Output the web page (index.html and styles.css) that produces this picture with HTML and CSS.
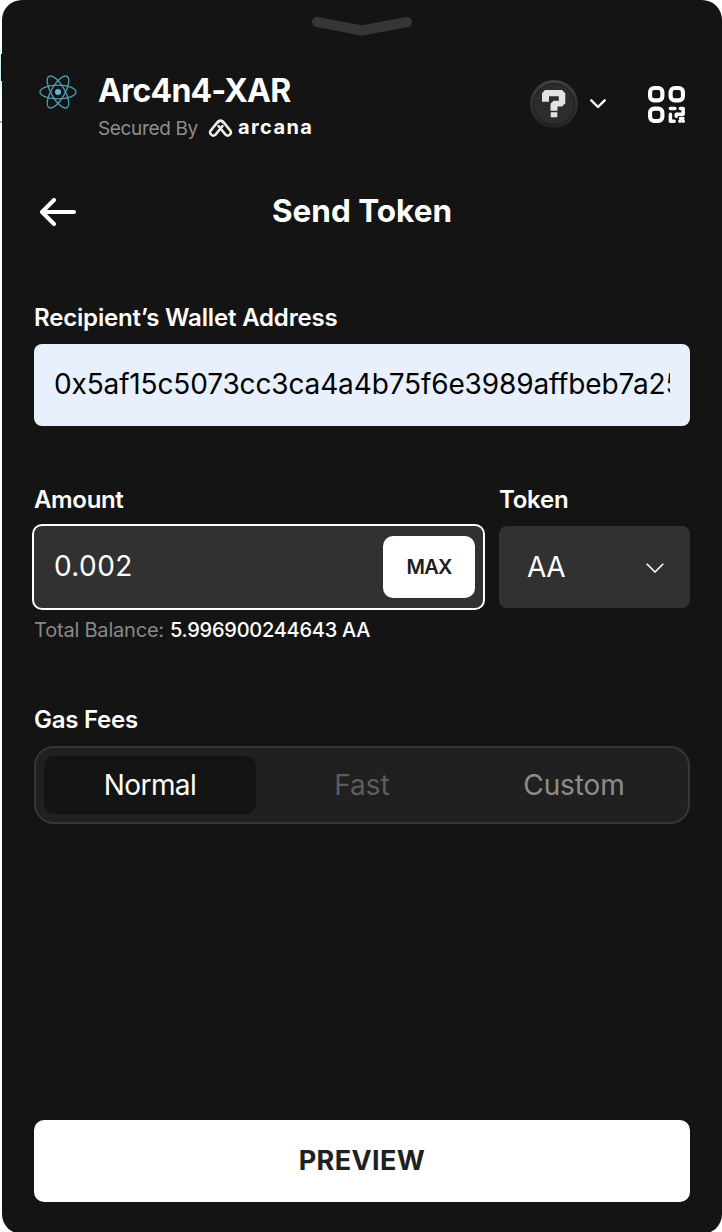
FILE: index.html
```html
<!DOCTYPE html>
<html lang="en">
<head>
<meta charset="utf-8">
<title>Send Token</title>
<link rel="stylesheet" href="styles.css">
</head>
<body>
<div class="page">
  <div class="backdrop"><div class="backdrop-glow"></div><div class="backdrop-rule"></div></div>
  <main class="wallet">
    <svg class="handle" viewBox="0 0 100 20" fill="none" stroke="#363636" stroke-width="10" stroke-linecap="round" stroke-linejoin="round"><path d="M5 6 50 14.5 95 6"/></svg>
    <header class="header">
      <svg class="app-logo" viewBox="-20 -20 40 40" fill="none" stroke="#4f9db5" stroke-width="1.3">
        <ellipse rx="18" ry="6.8"/><ellipse rx="18" ry="6.8" transform="rotate(60)"/><ellipse rx="18" ry="6.8" transform="rotate(120)"/>
        <circle r="3" fill="#61b8d6" stroke="none"/>
      </svg>
      <div class="brand">
        <h1 class="app-name"><span>Arc4n4-XAR</span></h1>
        <div class="secured">
          <span class="secured-by">Secured By</span>
          <svg class="arcana-mark" viewBox="0 0 24 20" fill="none" stroke="#ededed" stroke-width="2.5" stroke-linejoin="round" stroke-linecap="round">
            <path d="M14.2 4.1A3.1 3.1 0 0 0 9.6 3.4L2.2 12.6C.2 15.2 4 19.5 7 16.6L14 8"/>
            <path d="M9.800 4.100A3.100 3.100 0 0 1 14.400 3.400L21.800 12.600C23.800 15.200 20 19.500 17 16.600L10 8"/>
          </svg>
          <span class="arcana">arcana</span>
        </div>
      </div>
      <svg class="network" viewBox="0 0 48 48">
        <defs><linearGradient id="coin" x1="0" y1="0" x2="0" y2="1"><stop stop-color="#404040"/><stop offset="1" stop-color="#222"/></linearGradient>
        <linearGradient id="face" x1="0" y1="0" x2="0" y2="1"><stop stop-color="#2b2b2b"/><stop offset="1" stop-color="#2d2d2d"/></linearGradient></defs>
        <circle cx="24" cy="24" r="24" fill="url(#coin)"/>
        <circle cx="24" cy="24" r="20.5" fill="url(#face)" stroke="#1e1e1e"/>
        <path fill="#e2e2e2" d="M15 10h17l3.300 3.300v10L32 26.500h-4.500v4.200h-7v-7l3-3h5.300v-4.500h-9.800v5.500h-7v-8.500zM20.700 32.300h6.600v5h-6.600z"/>
      </svg>
      <svg class="network-caret" viewBox="0 0 16 10" fill="none" stroke="#fff" stroke-width="2.4" stroke-linecap="round" stroke-linejoin="round"><path d="m1.300 1.300 6.700 6.700 6.700-6.700"/></svg>
      <svg class="qr" viewBox="0 0 36 36" fill="none" stroke="#fff" stroke-width="4">
        <rect x="2" y="2" width="12" height="12" rx="4"/><rect x="22" y="2" width="12" height="12" rx="4"/><rect x="2" y="22" width="12" height="12" rx="4"/>
        <g stroke-width="3.400" stroke-linecap="round" stroke-linejoin="round"><path d="M21.800 21.800h4.400M31.500 21.800H34.200V27.500H27.500V29.500M21.800 27.500V34.200H25.500M31 34.200h.1M34.200 34.200h.1M31.500 31.500h2.500"/></g>
      </svg>
    </header>

    <div class="title-bar">
      <svg class="back" viewBox="0 0 36 28" fill="none" stroke="#fff" stroke-width="4" stroke-linecap="round" stroke-linejoin="round"><path d="M14 2 2 14 14 26M2 14H34"/></svg>
      <h2 class="title"><span>Send Token</span></h2>
    </div>

    <label class="label label-recipient"><span>Recipient’s Wallet Address</span></label>
    <div class="recipient"><div class="recipient-text"><span>0x5af15c5073cc3ca4a4b75f6e3989affbeb7a25</span></div></div>

    <div class="amount-row">
      <div class="amount-col">
        <label class="label label-amount"><span>Amount</span></label>
        <div class="amount"><span class="amount-value">0.002</span><button class="max"><span>MAX</span></button></div>
      </div>
      <div class="token-col">
        <label class="label label-token"><span>Token</span></label>
        <div class="token"><span class="token-value">AA</span>
          <svg class="token-caret" viewBox="0 0 18 10" fill="none" stroke="#fff" stroke-width="1.600"><path d="m.7.7 8.300 8.300L17.300.7"/></svg>
        </div>
      </div>
    </div>
    <p class="balance"><span class="balance-label">Total Balance:</span><span class="balance-value">5.996900244643 AA</span></p>

    <label class="label label-gas"><span>Gas Fees</span></label>
    <div class="tabs">
      <div class="tab tab-active"><span>Normal</span></div>
      <div class="tab tab-fast"><span>Fast</span></div>
      <div class="tab tab-custom"><span>Custom</span></div>
    </div>

    <button class="preview"><span>PREVIEW</span></button>
  </main>
</div>
</body>
</html>
```

FILE: styles.css
```css
* { box-sizing: border-box; }
body { margin: 0; background: #fff; font-family: Inter, "Open Sans", sans-serif; color: #fff; }
button { border: 0; padding: 0; font-family: inherit; }
svg { display: block; flex: none; }
span { white-space: nowrap; }
.page { display: flex; width: 722px; height: 1232px; overflow: hidden; }
.backdrop { width: 2px; flex: none; padding-top: 42px; }
.backdrop-glow { height: 54px; background: linear-gradient(#fff, #bfeef2 50%, #fff); padding: 12px 0 15px 1px; }
.backdrop-glow::before { content: ""; display: block; height: 27px; background: #000; }
.backdrop-rule { margin-top: 25px; height: 2px; background: #aaa; }
.wallet { display: flex; flex-direction: column; width: 720px; height: 1234px; flex: none; padding: 16px 32px 32px; background: #141414; border-radius: 20px; }
.handle { width: 100px; height: 20px; align-self: center; }
.header { display: flex; height: 72px; margin-top: 36px; padding-left: 4px; }
.app-logo { width: 40px; height: 40px; }
.brand { width: 432px; margin-left: 20px; }
.app-name { margin: 0; height: 38px; line-height: 38px; font-size: 32px; font-weight: 700; letter-spacing: -.8px; }
.secured { display: flex; align-items: center; height: 36px; }
.secured-by { width: 110px; font-size: 19px; letter-spacing: -.35px; color: #8d8d8d; }
.arcana-mark { width: 25px; height: 20px; }
.arcana { margin: -3px 0 0 5px; font-size: 20px; font-weight: 700; letter-spacing: 1.4px; }
.network { width: 48px; height: 48px; margin-top: 8px; }
.network-caret { width: 16px; height: 10px; margin: 27px 0 0 12px; }
.qr { width: 37px; height: 37px; margin: 14px 0 0 42px; }
.title-bar { display: grid; grid-template-columns: 48px 1fr 48px; align-items: center; height: 44px; margin-top: 46px; }
.back { width: 36px; height: 28px; margin-left: 6px; }
.title { margin: -3px 0 0; text-align: center; font-size: 31.5px; font-weight: 700; }
.label { display: block; height: 32px; line-height: 32px; font-size: 24px; font-weight: 600; letter-spacing: -.25px; }
.label-recipient { margin-top: 68px; letter-spacing: -.17px; }
.label-amount { letter-spacing: -.35px; }
.recipient { height: 82px; margin-top: 10px; padding: 0 20px; border-radius: 8px; background: #e8f0fe; color: #000; font-size: 28px; line-height: 80px; letter-spacing: -.14px; }
.recipient-text { overflow: hidden; }
.amount-row { display: flex; gap: 16px; margin-top: 58px; }
.amount-col { width: 449px; }
.token-col { width: 191px; }
.amount, .token { display: flex; align-items: center; justify-content: space-between; height: 82px; margin-top: 10px; background: #313131; border-radius: 8px; font-size: 28px; }
.amount { padding: 0 8px 0 20px; box-shadow: 0 0 0 2px #fff; }
.amount-value { margin-top: -2px; letter-spacing: .4px; }
.token { padding: 0 26px 0 28px; }
.token-value { letter-spacing: -.6px; }
.max { width: 92px; height: 62px; padding-bottom: 1px; background: #fff; border-radius: 10px; color: #202020; font-size: 20px; font-weight: 600; letter-spacing: -.8px; }
.token-caret { width: 18px; height: 10px; margin-top: 2px; }
.balance { display: flex; gap: 7px; height: 28px; margin: 8px 0 0; line-height: 28px; font-size: 20px; }
.balance-label { width: 129px; color: #888; letter-spacing: -.2px; }
.balance-value { font-weight: 500; letter-spacing: -.25px; }
.label-gas { margin-top: 60px; }
.tabs { display: flex; height: 78px; margin-top: 10px; padding: 8px; border: 2px solid #363636; border-radius: 20px; background: #202020; font-size: 28px; }
.tab { flex: 1; display: flex; align-items: center; justify-content: center; height: 58px; padding-bottom: 1px; border-radius: 10px; }
.tab-active { background: #141414; letter-spacing: -.6px; }
.tab-fast { color: #5d5d5d; }
.tab-custom { color: #8c8c8c; letter-spacing: -.1px; }
.preview { height: 82px; margin-top: auto; padding-bottom: 2px; flex: none; background: #fff; border-radius: 10px; color: #202020; font-size: 27px; font-weight: 700; letter-spacing: .4px; }
```
